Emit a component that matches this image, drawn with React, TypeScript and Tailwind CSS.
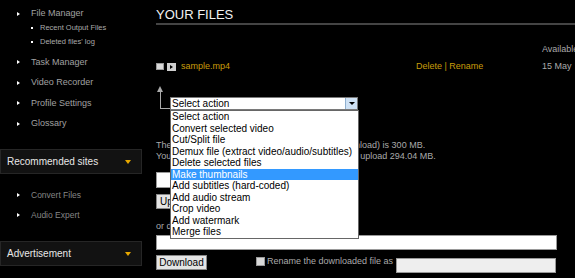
import React from "react";

const navItems = ["Task Manager", "Video Recorder", "Profile Settings", "Glossary"];

const actions = [
  "Select action",
  "Convert selected video",
  "Cut/Split file",
  "Demux file (extract video/audio/subtitles)",
  "Delete selected files",
  "Make thumbnails",
  "Add subtitles (hard-coded)",
  "Add audio stream",
  "Crop video",
  "Add watermark",
  "Merge files",
];

function Arrow() {
  return <span className="w-0 h-0 border-y-[2.5px] border-y-transparent border-l-[3px] border-l-white" />;
}

function BoxHeader({ title }: { title: string }) {
  return (
    <div className="h-[25px] w-[142px] bg-[#121212] border border-[#262626] flex items-center justify-between pl-[6px] pr-[10px]">
      <span className="text-[10px] text-[#e8e8e8]">{title}</span>
      <span className="w-0 h-0 border-x-[3.5px] border-x-transparent border-t-[4px] border-t-[#e8a800]" />
    </div>
  );
}

function Sidebar() {
  return (
    <div className="w-[142px] shrink-0 flex flex-col">
      <div className="mt-[7px] h-[14px] flex items-center">
        <span className="w-[31px] pl-[17px] flex items-center"><Arrow /></span>
        <span className="text-[9px] text-[#a0a0a0]">File Manager</span>
      </div>
      {["Recent Output Files", "Deleted files' log"].map((s) => (
        <div key={s} className="h-[14px] flex items-center pl-[31px]">
          <span className="w-[2px] h-[2px] bg-white mr-[7px]" />
          <span className="text-[7.5px] text-[#aaa]">{s}</span>
        </div>
      ))}
      <div className="mt-[3px]">
        {navItems.map((s) => (
          <div key={s} className="h-[20.5px] flex items-center">
            <span className="w-[31px] pl-[17px] flex items-center"><Arrow /></span>
            <span className="text-[9px] text-[#a0a0a0]">{s}</span>
          </div>
        ))}
      </div>
      <div className="mt-[15px]">
        <BoxHeader title="Recommended sites" />
      </div>
      <div className="mt-[11px]">
        {["Convert Files", "Audio Expert"].map((s) => (
          <div key={s} className="h-[20px] flex items-center">
            <span className="w-[31px] pl-[17px] flex items-center"><Arrow /></span>
            <span className="text-[8.5px] text-[#858585]">{s}</span>
          </div>
        ))}
      </div>
      <div className="mt-[16px]">
        <BoxHeader title="Advertisement" />
      </div>
    </div>
  );
}

function Main() {
  return (
    <div className="flex-1 ml-[14px] flex flex-col">
      <div className="mt-[6px] h-[19px] leading-[17px] text-[13px] text-[#f2f2f2] border-b-2 border-[#444]">
        YOUR FILES
      </div>
      <div className="mt-[19px] h-[11px] leading-[11px] text-[9px] text-[#aaa] pl-[386px] whitespace-nowrap">Available</div>
      <div className="mt-[6px] h-[11px] flex items-center text-[9px] whitespace-nowrap">
        <div className="w-[260px] flex items-center">
          <span className="w-[8px] h-[7px] bg-[#d8d8d8] border border-[#999]" />
          <span className="ml-[3px] w-[9px] h-[8px] bg-[#cfcfcf] flex items-center justify-center">
            <span className="w-0 h-0 border-y-[2.5px] border-y-transparent border-l-[3px] border-l-black" />
          </span>
          <span className="ml-[5px] text-[#c99c0a]">sample.mp4</span>
        </div>
        <div className="w-[126px] text-[#c99c0a]">Delete | Rename</div>
        <div className="text-[#aaa]">15 May</div>
      </div>

      <div className="mt-[14px] h-[24px] relative flex">
        <div className="w-[14px] h-[23px] flex flex-col items-start pl-[1px]">
          <span className="w-0 h-0 border-x-[3px] border-x-transparent border-b-[6px] border-b-[#aaa]" />
          <span className="ml-[2.5px] w-px flex-1 bg-[#aaa]" />
          <span className="ml-[2.5px] w-[11px] h-px bg-[#aaa]" />
        </div>
        <div className="relative mt-[11px] w-[188px] h-[13px] self-start">
          <div className="h-[13px] bg-white border border-[#7a7a7a] flex items-center text-[10px] text-black pl-[1px]">
            <span className="flex-1">Select action</span>
            <span className="w-[12px] h-[11px] bg-[#cfe2f5] border-l border-[#8fb0d0] flex items-center justify-center">
              <span className="w-0 h-0 border-x-[3px] border-x-transparent border-t-[3px] border-t-black" />
            </span>
          </div>
          <div className="absolute left-0 top-[13px] w-[189px] bg-white border border-[#666] z-10">
            {actions.map((a, i) => (
              <div
                key={a}
                className={
                  "h-[11.55px] leading-[11.55px] text-[10px] pl-[1px] whitespace-nowrap " +
                  (i === 5 ? "bg-[#3399ff] text-white" : "text-black")
                }
              >
                {a}
              </div>
            ))}
          </div>
        </div>
      </div>

      <div className="mt-[30px] text-[9px] leading-[11px] text-[#aaa] whitespace-nowrap">
        <div>The maximum size of one file (for upload and download) is 300 MB.</div>
        <div>You can upload files of total size, available for your upload 294.04 MB.</div>
      </div>
      <div className="mt-[10px] h-[16px] w-[200px] bg-white border border-[#999]" />
      <div className="mt-[6px] flex">
        <button className="h-[15px] px-[3px] bg-[#e4e4e4] border border-[#888] text-[10px] leading-[13px] text-black">Upload</button>
      </div>
      <div className="mt-[12px] h-[11px] leading-[11px] text-[9px] text-[#aaa]">or download from URL:</div>
      <div className="mt-[3px] h-[15px] w-[401px] bg-white border border-[#999]" />
      <div className="mt-[5px] flex items-start">
        <button className="h-[15px] w-[51px] bg-[#e4e4e4] border border-[#888] text-[10px] leading-[13px] text-black">Download</button>
        <span className="ml-[49px] mt-[2px] w-[9px] h-[9px] bg-[#d8d8d8] border border-[#999]" />
        <span className="ml-[2px] mt-[1px] text-[9px] leading-[11px] text-[#aaa] whitespace-nowrap">Rename the downloaded file as</span>
        <span className="ml-[3px] mt-[3px] w-[160px] h-[15px] bg-[#eee] border border-[#999]" />
      </div>
    </div>
  );
}

export default function App() {
  return (
    <div className="w-[575px] h-[278px] overflow-hidden bg-black flex font-['Liberation_Sans',Arial,sans-serif]">
      <Sidebar />
      <Main />
    </div>
  );
}
